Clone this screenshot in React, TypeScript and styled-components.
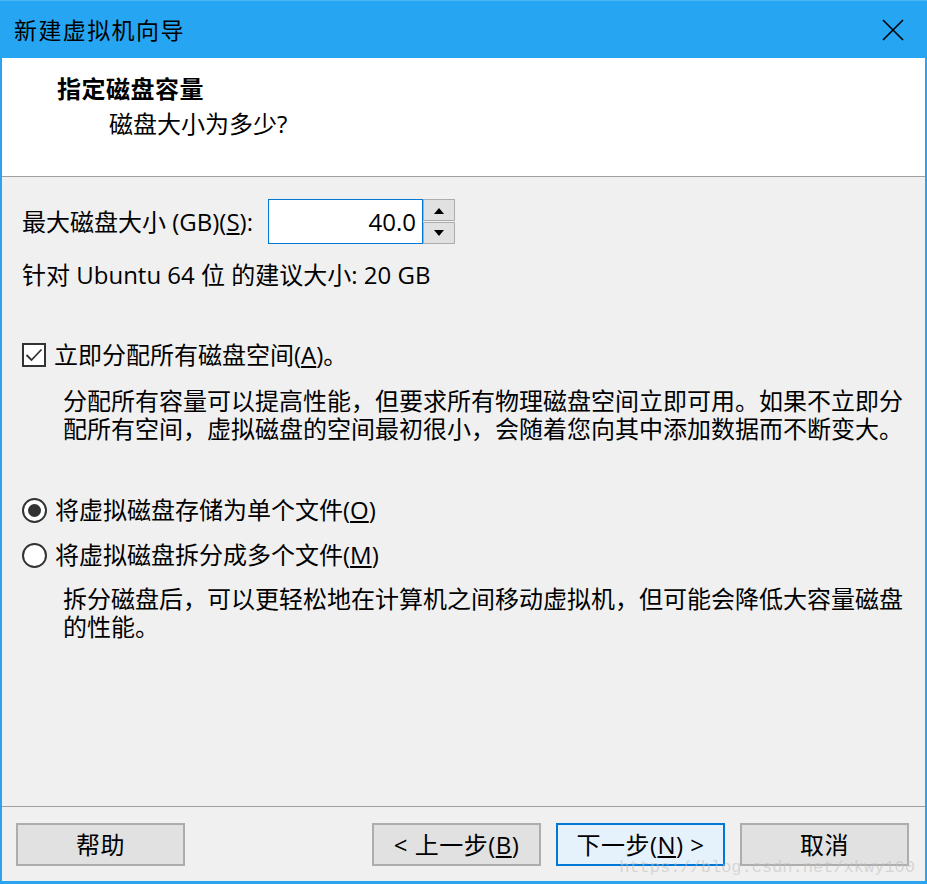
import styled, { createGlobalStyle } from "styled-components";

const GlobalStyle = createGlobalStyle`
  html, body {
    margin: 0;
    padding: 0;
    background: #f0f0f0;
  }
  * {
    box-sizing: border-box;
  }
`;

const font = `"Open Sans", "Noto Sans CJK SC", sans-serif`;

const Window = styled.div`
  position: relative;
  width: 927px;
  height: 884px;
  display: flex;
  flex-direction: column;
  background: #2aa4ef;
  padding: 0 2px 3px 2px;
  font-family: ${font};
  color: #000;
`;

const TitleBar = styled.div`
  height: 58px;
  display: flex;
  align-items: center;
  justify-content: space-between;
  padding: 0 20px 0 14px;
  background: #25a5f2;
  border-top: 1px solid #4db6f5;
  margin: 0 -2px;
`;

const Title = styled.span`
  font-family: "Noto Sans CJK SC", sans-serif;
  font-size: 23px;
  line-height: 1;
  letter-spacing: 1.4px;
`;

const CloseIcon = styled.svg`
  width: 24px;
  height: 24px;
  margin-right: 2px;
`;

const Header = styled.div`
  height: 119px;
  background: #fff;
  border-bottom: 1px solid #a0a0a0;
  padding: 14px 0 0 55px;
`;

const Heading = styled.div`
  font-family: "Noto Sans CJK SC", sans-serif;
  font-size: 24px;
  font-weight: 700;
  line-height: 32px;
  letter-spacing: 0.5px;
`;

const SubHeading = styled.div`
  font-size: 24px;
  line-height: 32px;
  padding-left: 52px;
  margin-top: 4px;
`;

const Body = styled.div`
  flex: 1;
  background: #f0f0f0;
  padding: 22px 0 0 20px;
  display: flex;
  flex-direction: column;
`;

const SizeRow = styled.div`
  display: flex;
  align-items: center;
  gap: 15px;
`;

const Text = styled.span`
  font-size: 24px;
  line-height: 32px;
  white-space: nowrap;
`;

const Spinner = styled.div`
  display: flex;
  height: 45px;
`;

const SpinInput = styled.div`
  width: 155px;
  height: 45px;
  background: #fff;
  border: 1px solid #0078d7;
  display: flex;
  align-items: center;
  justify-content: flex-end;
  padding-right: 6px;
  font-size: 24px;
`;

const SpinButtons = styled.div`
  display: flex;
  flex-direction: column;
  gap: 1px;
  width: 32px;
`;

const SpinButton = styled.div`
  flex: 1;
  background: #e1e1e1;
  border: 1px solid #adadad;
  display: flex;
  align-items: center;
  justify-content: center;
`;

const Recommend = styled(Text)`
  display: block;
  margin-top: 15px;
`;

const OptionRow = styled.div<{ $top: number }>`
  display: flex;
  align-items: center;
  gap: 8px;
  margin-top: ${(p) => p.$top}px;
`;

const CheckBox = styled.span`
  width: 24px;
  height: 24px;
  border: 2px solid #333;
  background: #fff;
  display: flex;
  align-items: center;
  justify-content: center;
`;

const Radio = styled.span<{ $checked?: boolean }>`
  width: 25px;
  height: 25px;
  border-radius: 50%;
  border: 2px solid #333;
  background: #fff;
  display: flex;
  align-items: center;
  justify-content: center;

  &::after {
    content: "";
    width: 13px;
    height: 13px;
    border-radius: 50%;
    background: ${(p) => (p.$checked ? "#333" : "transparent")};
  }
`;

const Description = styled.p<{ $top: number }>`
  margin: ${(p) => p.$top}px 0 0 41px;
  width: 848px;
  font-size: 24px;
  line-height: 28px;
`;

const Footer = styled.div`
  height: 75px;
  background: #f0f0f0;
  border-top: 1px solid #a0a0a0;
  display: flex;
  align-items: flex-start;
  padding: 16px 0 0 14px;
`;

const Button = styled.div<{ $primary?: boolean; $gap?: number }>`
  width: 169px;
  height: 43px;
  margin-left: ${(p) => p.$gap ?? 0}px;
  background: ${(p) => (p.$primary ? "#e5f1fb" : "#e1e1e1")};
  border: ${(p) => (p.$primary ? "2px solid #0078d7" : "2px solid #adadad")};
  display: flex;
  align-items: center;
  justify-content: center;
  font-size: 24px;
  line-height: 1;
  letter-spacing: 0.5px;
`;

const Watermark = styled.div`
  position: absolute;
  right: 12px;
  bottom: 7px;
  font-family: "Liberation Mono", monospace;
  font-size: 17px;
  color: rgba(190, 190, 190, 0.55);
  pointer-events: none;
`;

const Arrow = ({ up }: { up?: boolean }) => (
  <svg width="12" height="7" viewBox="0 0 12 7">
    <polygon points={up ? "1,7 6,1 11,7" : "1,0 6,6 11,0"} fill="#000" />
  </svg>
);

export default function App() {
  return (
    <>
      <GlobalStyle />
      <Window>
        <TitleBar>
          <Title>新建虚拟机向导</Title>
          <CloseIcon viewBox="0 0 24 24">
            <path d="M2 2 L22 22 M22 2 L2 22" stroke="#000" strokeWidth="1.6" fill="none" />
          </CloseIcon>
        </TitleBar>
        <Header>
          <Heading>指定磁盘容量</Heading>
          <SubHeading>磁盘大小为多少?</SubHeading>
        </Header>
        <Body>
          <SizeRow>
            <Text>
              最大磁盘大小 (GB)(<u>S</u>):
            </Text>
            <Spinner>
              <SpinInput>40.0</SpinInput>
              <SpinButtons>
                <SpinButton>
                  <Arrow up />
                </SpinButton>
                <SpinButton>
                  <Arrow />
                </SpinButton>
              </SpinButtons>
            </Spinner>
          </SizeRow>
          <Recommend>针对 Ubuntu 64 位 的建议大小: 20 GB</Recommend>
          <OptionRow $top={48}>
            <CheckBox>
              <svg width="18" height="14" viewBox="0 0 18 14">
                <path d="M1.5 7 L6.5 12 L16.5 1.5" stroke="#333" strokeWidth="1.8" fill="none" />
              </svg>
            </CheckBox>
            <Text>
              立即分配所有磁盘空间(<u>A</u>)。
            </Text>
          </OptionRow>
          <Description $top={16}>
            分配所有容量可以提高性能，但要求所有物理磁盘空间立即可用。如果不立即分配所有空间，虚拟磁盘的空间最初很小，会随着您向其中添加数据而不断变大。
          </Description>
          <OptionRow $top={51}>
            <Radio $checked />
            <Text>
              将虚拟磁盘存储为单个文件(<u>O</u>)
            </Text>
          </OptionRow>
          <OptionRow $top={13}>
            <Radio />
            <Text>
              将虚拟磁盘拆分成多个文件(<u>M</u>)
            </Text>
          </OptionRow>
          <Description $top={14}>
            拆分磁盘后，可以更轻松地在计算机之间移动虚拟机，但可能会降低大容量磁盘的性能。
          </Description>
        </Body>
        <Footer>
          <Button>帮助</Button>
          <Button $gap={187}>
            &lt; 上一步(<u>B</u>)
          </Button>
          <Button $primary $gap={15}>
            下一步(<u>N</u>) &gt;
          </Button>
          <Button $gap={15}>取消</Button>
        </Footer>
        <Watermark>https://blog.csdn.net/xkwy100</Watermark>
      </Window>
    </>
  );
}
